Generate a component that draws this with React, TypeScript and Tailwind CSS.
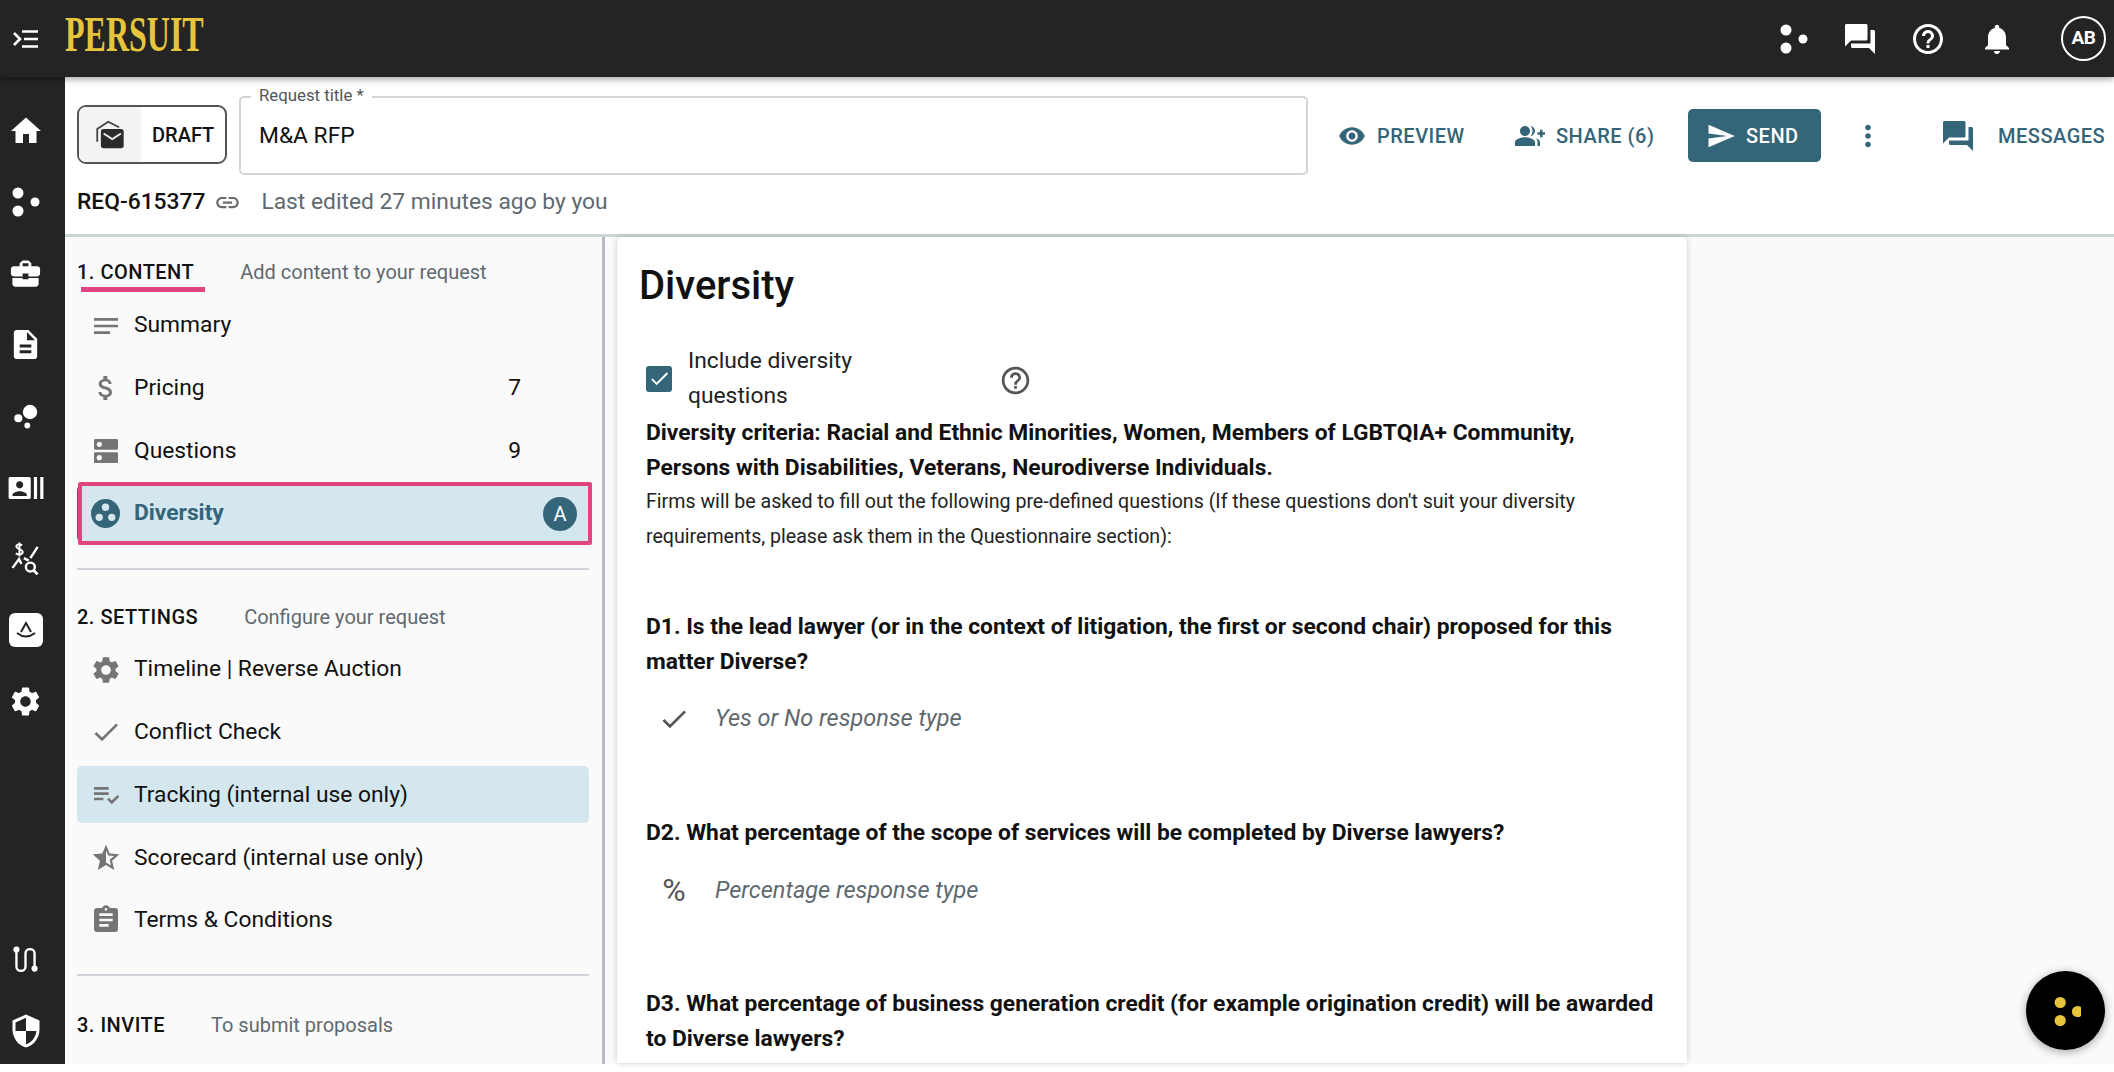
import type { ReactNode } from 'react';
import {
  MdHome,
  MdBusinessCenter,
  MdDescription,
  MdRecentActors,
  MdSettings,
  MdSecurity,
  MdForum,
  MdHelpOutline,
  MdNotifications,
  MdVisibility,
  MdGroupAdd,
  MdSend,
  MdMoreVert,
  MdLink,
  MdNotes,
  MdAttachMoney,
  MdDns,
  MdCheck,
  MdPlaylistAddCheck,
  MdStarHalf,
  MdAssignment,
} from 'react-icons/md';

function Dots({ className, fill = '#fff' }: { className?: string; fill?: string }) {
  return (
    <svg viewBox="0 0 30 30" className={className} fill={fill}>
      <circle cx="7" cy="6" r="5.5" />
      <circle cx="7" cy="24" r="5.5" />
      <circle cx="24" cy="15" r="4.5" />
    </svg>
  );
}

function Bubbles({ className }: { className?: string }) {
  return (
    <svg viewBox="0 0 30 30" className={className} fill="#fff">
      <circle cx="20" cy="10" r="8" />
      <circle cx="7" cy="17" r="4.5" />
      <circle cx="17" cy="25" r="3.2" />
    </svg>
  );
}

function ChartSearch({ className }: { className?: string }) {
  return (
    <svg viewBox="0 0 36 42" className={className} fill="none" stroke="#fff" strokeWidth="3" overflow="visible">
      <path d="M14 4 C9 1.5 6 4 7 6.5 C8 9 14 9 14.5 12 C15 15 10.5 16.5 6 14 M10.5 0.5 V18" strokeWidth="2.4" />
      <path d="M2 32 L10 21 L13 27 M16 20 L22 23 M24 20 L33 6" />
      <circle cx="24" cy="31" r="5.5" strokeWidth="3" />
      <path d="M28 35 L33 40" strokeWidth="3.4" />
    </svg>
  );
}

function RouteIcon({ className }: { className?: string }) {
  return (
    <svg viewBox="0 0 30 32" className={className} fill="none" stroke="#fff" strokeWidth="2.6">
      <circle cx="5" cy="5" r="3.4" fill="#fff" stroke="none" />
      <circle cx="25" cy="26" r="3.4" fill="#fff" stroke="none" />
      <path d="M5 6 V24 C5 30 15 30 15 24 V9 C15 3 25 3 25 9 V25" />
    </svg>
  );
}

function DraftIcon() {
  return (
    <svg viewBox="0 0 32 34" className="h-[31px] w-[30px]">
      <path d="M2 25 V11 L14 3 L26 9" fill="none" stroke="#444" strokeWidth="2" />
      <rect x="6" y="11" width="25" height="21" rx="3" fill="#2b2b2b" />
      <path d="M9 16 L18.5 22 L28 16" fill="none" stroke="#eee" strokeWidth="2" />
    </svg>
  );
}

function DiversityIcon() {
  return (
    <svg viewBox="0 0 30 30" className="h-[29px] w-[29px]">
      <circle cx="15" cy="15" r="15" fill="#346579" />
      <circle cx="15" cy="8.5" r="3.8" fill="#d4e7ef" />
      <circle cx="8.5" cy="19" r="3.8" fill="#d4e7ef" />
      <circle cx="21.5" cy="19" r="3.8" fill="#d4e7ef" />
    </svg>
  );
}

function NavIcon({ children }: { children: ReactNode }) {
  return <div className="flex h-[71.4px] w-[51px] shrink-0 items-center justify-center">{children}</div>;
}

function SideNav() {
  return (
    <nav className="flex h-full w-[65px] shrink-0 flex-col bg-[#242424] pt-[18px]">
      <NavIcon><MdHome className="h-[36px] w-[36px] text-white" /></NavIcon>
      <NavIcon><Dots className="h-[30px] w-[30px]" /></NavIcon>
      <NavIcon><MdBusinessCenter className="h-[35px] w-[35px] text-white" /></NavIcon>
      <NavIcon><MdDescription className="h-[35px] w-[35px] text-white" /></NavIcon>
      <NavIcon><Bubbles className="h-[27px] w-[27px]" /></NavIcon>
      <NavIcon><MdRecentActors className="h-[38px] w-[38px] text-white" /></NavIcon>
      <NavIcon><ChartSearch className="h-[34px] w-[33px]" /></NavIcon>
      <NavIcon>
        <div className="flex h-[34px] w-[34px] items-center justify-center rounded-[6px] bg-white">
          <svg viewBox="0 0 24 24" className="h-[24px] w-[24px]" fill="none" stroke="#242424" strokeWidth="2">
            <path d="M7 14 L12 5 L17 14" />
            <path d="M3 15 Q12 22 21 15" />
          </svg>
        </div>
      </NavIcon>
      <NavIcon><MdSettings className="h-[35px] w-[35px] text-white" /></NavIcon>
      <div className="mt-auto -mb-[3px] flex flex-col">
        <NavIcon><RouteIcon className="h-[29px] w-[29px]" /></NavIcon>
        <NavIcon><MdSecurity className="h-[36px] w-[36px] text-white" /></NavIcon>
      </div>
    </nav>
  );
}

function TopBar() {
  return (
    <header className="relative z-20 flex h-[77px] shrink-0 items-center bg-[#242424] shadow-[0_3px_6px_rgba(0,0,0,0.3)]">
      <div className="flex w-[51px] justify-center">
        <svg viewBox="0 0 26 20" className="h-[20px] w-[26px]" fill="none" stroke="#fff" strokeWidth="2.6">
          <path d="M1 4 L7 10 L1 16 M9 2.5 H25 M11 10 H25 M9 17.5 H25" />
        </svg>
      </div>
      <div className="ml-[14px] w-[138px] font-['Liberation_Serif',serif] text-[50px] font-bold leading-none text-[#e6c53c] origin-left scale-x-[0.64] -translate-y-[5px]">
        PERSUIT
      </div>
      <div className="ml-auto flex items-center">
        <Dots className="h-[30px] w-[30px]" />
        <MdForum className="ml-[33px] h-[36px] w-[36px] text-white" />
        <MdHelpOutline className="ml-[32px] h-[36px] w-[36px] text-white" />
        <MdNotifications className="ml-[33px] h-[36px] w-[36px] text-white" />
        <div className="ml-[46px] mr-[8px] flex h-[45px] w-[45px] items-center justify-center rounded-full border-2 border-white text-[19px] font-bold tracking-[-0.5px] text-white">
          AB
        </div>
      </div>
    </header>
  );
}

function ActionLink({ icon, label, className }: { icon: ReactNode; label: string; className?: string }) {
  return (
    <div className={`flex items-center text-[20px] font-medium tracking-[0.5px] text-[#346579] ${className ?? ''}`}>
      {icon}
      <span>{label}</span>
    </div>
  );
}

function RequestHeader() {
  return (
    <div className="flex h-[160px] shrink-0 flex-col border-b-[3px] border-[#cbd5d5] bg-white pl-[12px]">
      <div className="flex h-[97px] items-start pt-[19px]">
        <div className="mt-[9px] flex h-[59px] w-[150px] shrink-0 overflow-hidden rounded-[9px] border-2 border-[#555]">
          <div className="flex w-[62px] items-center justify-center bg-[#f3f3f3]"><DraftIcon /></div>
          <div className="flex flex-1 items-center pl-[11px] text-[20px] font-medium text-[#111]">DRAFT</div>
        </div>
        <div className="relative ml-[12px] flex h-[79px] w-[1069px] shrink-0 items-center rounded-[5px] border-2 border-[#d4d4d4] pl-[18px] pt-[2px] text-[22.8px] text-[#111]">
          <span className="absolute -top-[15px] left-[10px] bg-white px-[8px] text-[16.8px] text-[#555]">Request title *</span>
          M&amp;A RFP
        </div>
        <div className="ml-[30px] mt-[10px] flex h-[59px] items-center">
          <ActionLink className="w-[177px]" label="PREVIEW" icon={<MdVisibility className="mr-[11px] h-[28px] w-[28px]" />} />
          <ActionLink className="w-[173px]" label="SHARE (6)" icon={<MdGroupAdd className="mr-[11px] h-[30px] w-[30px]" />} />
          <div className="flex h-[53px] w-[133px] items-center rounded-[5px] bg-[#346579] pl-[18px] text-[20px] font-medium tracking-[0.5px] text-white">
            <MdSend className="mr-[10px] h-[30px] w-[30px]" />
            SEND
          </div>
          <MdMoreVert className="ml-[30px] h-[34px] w-[34px] text-[#346579]" />
          <MdForum className="ml-[55px] h-[36px] w-[36px] text-[#346579]" />
          <span className="ml-[22px] text-[20px] font-medium tracking-[0.5px] text-[#346579]">MESSAGES</span>
        </div>
      </div>
      <div className="flex h-[56px] items-center text-[22.8px]">
        <span className="font-medium text-[#111]">REQ-615377</span>
        <MdLink className="ml-[9px] h-[27px] w-[27px] text-[#6b6b6b]" />
        <span className="ml-[20px] text-[#5f6970]">Last edited 27 minutes ago by you</span>
      </div>
    </div>
  );
}

function SectionTitle({ title, hint, hintClass, active }: { title: string; hint: string; hintClass: string; active?: boolean }) {
  return (
    <div className="relative flex h-[50px] items-center">
      <span className="text-[20px] font-medium tracking-[0.5px] text-[#111]">{title}</span>
      <span className={`text-[20px] text-[#5f6970] ${hintClass}`}>{hint}</span>
      {active && <span className="absolute bottom-[5px] left-[4px] h-[5px] w-[124px] bg-[#e0457f]" />}
    </div>
  );
}

function Item({ icon, label, right, selected }: { icon: ReactNode; label: string; right?: ReactNode; selected?: boolean }) {
  return (
    <div className={`mb-[5.7px] flex h-[57px] items-center rounded-[5px] pl-[14px] pr-[68px] text-[22.8px] text-[#111] ${selected ? 'bg-[#d4e7ef]' : ''}`}>
      <span className="flex w-[29px] justify-center text-[#757575]">{icon}</span>
      <span className="ml-[14px] flex-1">{label}</span>
      {right}
    </div>
  );
}

const iconCls = 'h-[32px] w-[32px] shrink-0';

function LeftPanel() {
  return (
    <aside className="flex w-[537px] shrink-0 flex-col bg-[#fafafa] pl-[12px] pr-[13px]">
      <div className="mt-[10px]">
        <SectionTitle title="1. CONTENT" hint="Add content to your request" hintClass="ml-[46px]" active />
      </div>
      <div>
        <Item icon={<MdNotes className={iconCls} />} label="Summary" />
        <Item icon={<MdAttachMoney className={iconCls} />} label="Pricing" right={<span>7</span>} />
        <Item icon={<MdDns className={iconCls} />} label="Questions" right={<span>9</span>} />
        <div className="relative flex h-[57px] items-center rounded-[5px] border-l-2 border-[#346579] bg-[#d4e7ef] pl-[12px] pr-[12px] text-[22.8px] font-bold text-[#346579]">
          <DiversityIcon />
          <span className="ml-[14px] flex-1">Diversity</span>
          <span className="flex h-[34px] w-[34px] items-center justify-center rounded-full bg-[#346579] text-[20px] font-normal text-white">A</span>
          <span className="absolute -top-[3px] -left-[1px] -right-[3px] -bottom-[3px] rounded-[2px] border-[4px] border-[#e0457f]" />
        </div>
      </div>
      <div className="mt-[26px] h-[2px] bg-[#d2d2da]" />
      <div className="mt-[22px]">
        <SectionTitle title="2. SETTINGS" hint="Configure your request" hintClass="ml-[46px]" />
      </div>
      <div className="-mt-[1px]">
        <Item icon={<MdSettings className={iconCls} />} label="Timeline | Reverse Auction" />
        <Item icon={<MdCheck className={iconCls} />} label="Conflict Check" />
        <Item icon={<MdPlaylistAddCheck className={iconCls} />} label="Tracking (internal use only)" selected />
        <Item icon={<MdStarHalf className={iconCls} />} label="Scorecard (internal use only)" />
        <Item icon={<MdAssignment className={iconCls} />} label="Terms & Conditions" />
      </div>
      <div className="mt-[19px] h-[2px] bg-[#d2d2da]" />
      <div className="mt-[24px]">
        <SectionTitle title="3. INVITE" hint="To submit proposals" hintClass="ml-[46px]" />
      </div>
    </aside>
  );
}

function ResponseType({ icon, label }: { icon: ReactNode; label: string }) {
  return (
    <div className="flex items-center text-[23.5px] italic text-[#5f6970]">
      <span className="mr-[13px] flex w-[56px] justify-center text-[#555]">{icon}</span>
      <span>{label}</span>
    </div>
  );
}

function QuestionCard() {
  return (
    <section className="ml-[12px] flex h-[826px] w-[1070px] shrink-0 flex-col overflow-hidden rounded-t-[6px] bg-white pl-[29px] pr-[24px] shadow-[0_0_6px_rgba(0,0,0,0.18)]">
      <h1 className="-ml-[7px] mt-[28px] text-[40px] font-medium leading-[42px] text-[#111]">Diversity</h1>
      <div className="mt-[37px] flex items-center">
        <span className="flex h-[26px] w-[26px] items-center justify-center rounded-[3px] bg-[#346579]">
          <MdCheck className="h-[23px] w-[23px] text-white" />
        </span>
        <span className="ml-[16px] w-[230px] text-[22.8px] leading-[34.5px] text-[#222]">Include diversity questions</span>
        <MdHelpOutline className="ml-[81px] mt-[4px] h-[33px] w-[33px] text-[#555]" />
      </div>
      <p className="mt-[3px] text-[22.8px] font-bold leading-[34.5px] text-[#111]">
        Diversity criteria: Racial and Ethnic Minorities, Women, Members of LGBTQIA+ Community, Persons with Disabilities, Veterans, Neurodiverse Individuals.
      </p>
      <p className="text-[19.6px] leading-[34.5px] text-[#222]">
        Firms will be asked to fill out the following pre-defined questions (If these questions don't suit your diversity requirements, please ask them in the Questionnaire section):
      </p>
      <p className="mt-[56px] text-[22.8px] font-bold leading-[34.5px] text-[#111]">
        D1. Is the lead lawyer (or in the context of litigation, the first or second chair) proposed for this matter Diverse?
      </p>
      <div className="mt-[22px]">
        <ResponseType icon={<MdCheck className="h-[32px] w-[32px]" />} label="Yes or No response type" />
      </div>
      <p className="mt-[80px] text-[22.8px] font-bold leading-[34.5px] text-[#111]">
        D2. What percentage of the scope of services will be completed by Diverse lawyers?
      </p>
      <div className="mt-[22px]">
        <ResponseType icon={<span className="text-[32px] not-italic leading-none">%</span>} label="Percentage response type" />
      </div>
      <p className="mt-[79px] text-[22.8px] font-bold leading-[34.5px] text-[#111]">
        D3. What percentage of business generation credit (for example origination credit) will be awarded to Diverse lawyers?
      </p>
    </section>
  );
}

export default function App() {
  return (
    <div className="relative h-[1072px] w-[2114px] overflow-hidden bg-white font-['Roboto',sans-serif]">
      <div className="flex h-[1064px] flex-col">
        <TopBar />
        <div className="flex min-h-0 flex-1">
          <SideNav />
          <main className="flex min-w-0 flex-1 flex-col">
            <RequestHeader />
            <div className="flex min-h-0 flex-1 bg-[#fafafa]">
              <LeftPanel />
              <div className="w-[3px] shrink-0 bg-[#b9b9c6]" />
              <QuestionCard />
            </div>
          </main>
        </div>
      </div>
      <div className="absolute left-[2026px] top-[971px] flex h-[79px] w-[79px] items-center justify-center rounded-full bg-black shadow-[0_2px_10px_rgba(0,0,0,0.35)]">
        <svg viewBox="0 0 30 30" className="h-[30px] w-[30px]" fill="#e6c53c">
          <circle cx="9.2" cy="6.5" r="5.6" />
          <circle cx="9.2" cy="24.5" r="5.6" />
          <circle cx="26.5" cy="15.5" r="5.6" />
        </svg>
      </div>
    </div>
  );
}
